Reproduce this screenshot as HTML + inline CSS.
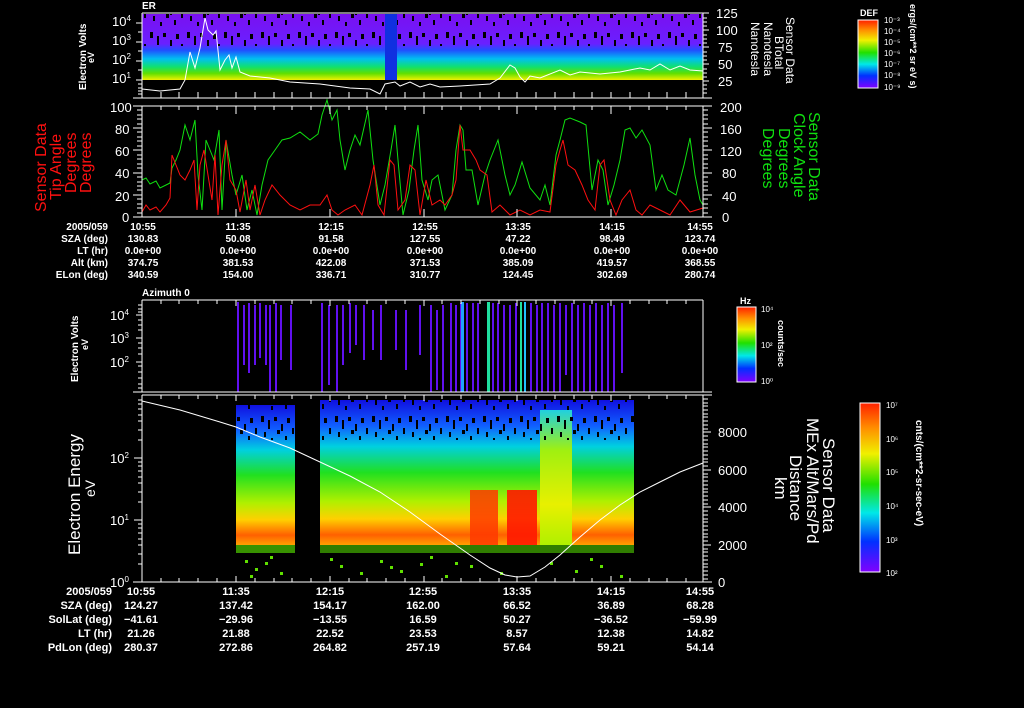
<!DOCTYPE html>
<html><head><style>
body{margin:0;background:#000;}
svg{display:block;font-family:"Liberation Sans",sans-serif;}
</style></head><body>
<svg width="1024" height="708" viewBox="0 0 1024 708" xmlns="http://www.w3.org/2000/svg">
<defs>
<linearGradient id="rb" x1="0" y1="0" x2="0" y2="1">
<stop offset="0" stop-color="#ff2000"/><stop offset="0.15" stop-color="#ff9000"/><stop offset="0.3" stop-color="#f0f000"/><stop offset="0.48" stop-color="#20e000"/><stop offset="0.65" stop-color="#00e8e8"/><stop offset="0.82" stop-color="#0030ff"/><stop offset="1" stop-color="#8000ff"/>
</linearGradient>
<linearGradient id="p1" x1="0" y1="0" x2="0" y2="1">
<stop offset="0" stop-color="#7a10f0"/><stop offset="0.45" stop-color="#6a20ff"/><stop offset="0.55" stop-color="#2050ff"/><stop offset="0.68" stop-color="#00c0f0"/><stop offset="0.8" stop-color="#10e070"/><stop offset="0.9" stop-color="#60e000"/><stop offset="1" stop-color="#f0f000"/>
</linearGradient>
<linearGradient id="p4" x1="0" y1="0" x2="0" y2="1">
<stop offset="0" stop-color="#1010e0"/><stop offset="0.18" stop-color="#1060ff"/><stop offset="0.32" stop-color="#00d0e0"/><stop offset="0.5" stop-color="#20e020"/><stop offset="0.7" stop-color="#b0f000"/><stop offset="0.82" stop-color="#ffd000"/><stop offset="0.93" stop-color="#ff6000"/><stop offset="1" stop-color="#ffa000"/>
</linearGradient>
<linearGradient id="p4b" x1="0" y1="0" x2="0" y2="1">
<stop offset="0" stop-color="#20d0e0"/><stop offset="0.3" stop-color="#a0f010"/><stop offset="0.7" stop-color="#e8f000"/><stop offset="1" stop-color="#b0f000"/>
</linearGradient>
<pattern id="sp" width="37" height="32" patternUnits="userSpaceOnUse">
<rect x="2" y="0" width="3" height="6" fill="#000"/><rect x="9" y="4" width="2" height="9" fill="#000"/><rect x="15" y="1" width="3" height="4" fill="#000"/><rect x="22" y="8" width="2" height="7" fill="#000"/><rect x="28" y="2" width="3" height="5" fill="#000"/><rect x="33" y="12" width="2" height="6" fill="#000"/><rect x="5" y="16" width="2" height="5" fill="#000"/><rect x="18" y="14" width="3" height="4" fill="#000"/><rect x="26" y="20" width="2" height="5" fill="#000"/><rect x="12" y="22" width="2" height="4" fill="#000"/>
</pattern>
</defs>

<!-- Panel 1 -->
<rect x="142" y="14" width="561" height="66" fill="url(#p1)"/>
<rect x="142" y="14" width="561" height="32" fill="url(#sp)"/>
<rect x="385" y="14" width="12" height="66" fill="#1030e0"/>
<polyline fill="none" stroke="#fff" stroke-width="1" points="142,89 160,91 180,89 185,80 190,52 195,68 200,48 205,18 208,30 213,35 216,31 220,70 225,60 229,55 232,68 236,57 240,72 250,76 270,78 290,82 320,84 350,88 370,89 380,94 385,84 395,82 400,86 410,82 420,87 430,84 440,87 460,86 490,84 500,78 510,65 515,68 520,77 525,82 530,76 540,78 560,70 570,75 580,72 600,74 620,72 630,70 640,68 650,70 660,64 670,70 680,66 690,70 703,71"/>
<g stroke="#fff" fill="none">
<path d="M142,13H703M133,98H712M142,13V98M703,13V98"/>
<path d="M142,23h-6M142,42h-6M142,61h-6M142,80h-6M142,88h-4M142,91h-4M142,94h-4M142,84h-4M142,70h-4M142,51h-4M142,32h-4"/>
<path d="M703,13h6M703,30h6M703,47h6M703,64h6M703,81h6"/>
<path d="M703,18h4M703,22h4M703,26h4M703,35h4M703,39h4M703,43h4M703,52h4M703,56h4M703,60h4M703,69h4M703,73h4M703,77h4M703,85h4M703,89h4M703,93h4"/>
<path d="M161,98v-6M179,98v-6M198,98v-6M217,98v-6M236,98v-6M255,98v-6M274,98v-6M292,98v-6M311,98v-6M330,98v-6M349,98v-6M367,98v-6M386,98v-6M405,98v-6M424,98v-6M442,98v-6M461,98v-6M480,98v-6M499,98v-6M517,98v-6M536,98v-6M555,98v-6M574,98v-6M592,98v-6M611,98v-6M630,98v-6M649,98v-6M667,98v-6M686,98v-6"/>
</g>
<g fill="#fff" font-size="13">
<text x="142" y="9" font-size="10" font-weight="bold">ER</text>
<text x="112" y="26">10<tspan font-size="8" dy="-5">4</tspan></text>
<text x="112" y="45">10<tspan font-size="8" dy="-5">3</tspan></text>
<text x="112" y="64">10<tspan font-size="8" dy="-5">2</tspan></text>
<text x="112" y="83">10<tspan font-size="8" dy="-5">1</tspan></text>
<text x="716" y="18">125</text><text x="716" y="35">100</text><text x="718" y="52">75</text><text x="718" y="69">50</text><text x="718" y="86">25</text>
</g>
<g fill="#fff" font-size="10" font-weight="bold">
<text transform="translate(86,90) rotate(-90)">Electron Volts</text>
<text transform="translate(94,63) rotate(-90)" font-size="9">eV</text>
</g>
<g fill="#fff" font-size="12">
<text transform="translate(786,17) rotate(90)">Sensor Data</text>
<text transform="translate(775,36) rotate(90)">BTotal</text>
<text transform="translate(764,22) rotate(90)">Nanotesla</text>
<text transform="translate(751,22) rotate(90)">Nanotesla</text>
</g>
<g fill="#fff" font-size="9" font-weight="bold">
<text x="860" y="16">DEF</text>
<text transform="translate(910,4) rotate(90)">ergs/(cm**2 sr eV s)</text>
</g>
<rect x="858" y="20" width="20" height="68" fill="url(#rb)" stroke="#fff"/>
<g fill="#fff" font-size="8"><text x="884" y="23">10⁻³</text><text x="884" y="34">10⁻⁴</text><text x="884" y="45">10⁻⁵</text><text x="884" y="56">10⁻⁶</text><text x="884" y="67">10⁻⁷</text><text x="884" y="78">10⁻⁸</text><text x="884" y="90">10⁻⁹</text></g>

<!-- Panel 2 -->
<polyline fill="none" stroke="#10e010" stroke-width="1" points="142,180 146,178 150,184 156,181 160,188 166,185 170,183 172,168 176,160 180,150 185,125 190,140 195,120 198,175 202,210 206,140 210,150 214,160 219,130 222,210 226,140 232,175 236,195 242,175 247,210 252,190 257,215 262,185 268,160 275,150 282,140 290,138 300,132 310,140 318,134 322,115 327,100 332,120 337,110 340,140 345,170 350,150 355,135 360,145 368,110 373,160 380,205 385,185 391,150 395,125 398,160 403,215 409,190 414,150 418,125 422,180 428,200 432,180 438,175 445,210 452,195 456,150 460,125 463,130 466,170 472,170 478,205 485,175 490,160 498,140 505,175 510,195 515,185 522,162 530,188 540,200 545,185 550,205 556,155 560,140 565,120 570,118 580,122 586,125 592,190 598,160 603,170 608,205 614,185 620,160 625,130 630,128 636,138 642,130 650,145 656,190 662,175 668,190 676,195 684,165 690,138 695,175 700,200 703,205"/>
<polyline fill="none" stroke="#ff1010" stroke-width="1" points="142,212 146,205 150,210 156,207 160,212 166,205 170,198 172,155 176,165 180,175 185,180 190,170 194,160 197,210 200,165 204,150 208,175 212,200 215,155 218,215 222,165 226,140 230,180 236,190 240,212 246,180 250,210 255,185 260,215 265,200 272,185 280,195 290,205 300,210 310,205 320,205 327,195 332,210 338,215 345,210 355,205 362,215 370,185 374,165 378,205 384,215 390,160 394,165 398,210 405,200 410,165 415,170 420,215 426,180 432,205 440,200 445,205 452,195 456,180 460,125 463,150 470,150 476,160 480,170 487,175 492,212 500,205 510,215 520,210 530,215 540,210 550,212 556,165 560,150 563,140 568,165 575,170 582,185 588,200 595,210 600,165 604,160 610,200 616,215 622,200 630,190 636,210 642,215 650,205 660,210 670,215 680,200 690,212 703,208"/>
<g stroke="#fff" fill="none">
<path d="M142,106H712M133,217H712M142,106V217M703,106V217"/>
<path d="M142,106h-9M142,128h-9M142,150h-9M142,173h-9M142,195h-9"/>
<path d="M142,110h-5M142,115h-5M142,119h-5M142,124h-5M142,132h-5M142,137h-5M142,141h-5M142,146h-5M142,155h-5M142,159h-5M142,164h-5M142,168h-5M142,177h-5M142,182h-5M142,186h-5M142,190h-5M142,199h-5M142,204h-5M142,208h-5M142,213h-5"/>
<path d="M703,106h9M703,128h9M703,150h9M703,173h9M703,195h9"/>
<path d="M703,110h5M703,115h5M703,119h5M703,124h5M703,132h5M703,137h5M703,141h5M703,146h5M703,155h5M703,159h5M703,164h5M703,168h5M703,177h5M703,182h5M703,186h5M703,190h5M703,199h5M703,204h5M703,208h5M703,213h5"/>
<path d="M161,106v4M179,106v4M198,106v4M217,106v4M255,106v4M274,106v4M292,106v4M311,106v4M349,106v4M367,106v4M386,106v4M405,106v4M442,106v4M461,106v4M480,106v4M499,106v4M536,106v4M555,106v4M574,106v4M592,106v4M630,106v4M649,106v4M667,106v4M686,106v4"/>
<path d="M236,106v8M330,106v8M424,106v8M517,106v8M611,106v8"/>
<path d="M236,217v-8M330,217v-8M424,217v-8M517,217v-8M611,217v-8"/>
</g>
<g fill="#fff" font-size="13">
<text x="110" y="112">100</text><text x="115" y="134">80</text><text x="115" y="156">60</text><text x="115" y="178">40</text><text x="115" y="201">20</text><text x="122" y="222">0</text>
<text x="720" y="112">200</text><text x="720" y="134">160</text><text x="720" y="156">120</text><text x="722" y="178">80</text><text x="722" y="201">40</text><text x="722" y="222">0</text>
</g>
<g fill="#ff1010" font-size="16">
<text transform="translate(46,212) rotate(-90)">Sensor Data</text>
<text transform="translate(61,200) rotate(-90)">Tip Angle</text>
<text transform="translate(76,193) rotate(-90)">Degrees</text>
<text transform="translate(91,193) rotate(-90)">Degrees</text>
</g>
<g fill="#10e010" font-size="16">
<text transform="translate(809,112) rotate(90)">Sensor Data</text>
<text transform="translate(794,113) rotate(90)">Clock Angle</text>
<text transform="translate(779,128) rotate(90)">Degrees</text>
<text transform="translate(763,128) rotate(90)">Degrees</text>
</g>
<g fill="#fff" font-size="10" font-weight="bold" text-anchor="middle">
<text x="108" y="230" text-anchor="end">2005/059</text>
<text x="108" y="242" text-anchor="end">SZA (deg)</text>
<text x="108" y="254" text-anchor="end">LT (hr)</text>
<text x="108" y="266" text-anchor="end">Alt (km)</text>
<text x="108" y="278" text-anchor="end">ELon (deg)</text>
<text x="143" y="230">10:55</text><text x="238" y="230">11:35</text><text x="331" y="230">12:15</text><text x="425" y="230">12:55</text><text x="518" y="230">13:35</text><text x="612" y="230">14:15</text><text x="700" y="230">14:55</text>
<text x="143" y="242">130.83</text><text x="238" y="242">50.08</text><text x="331" y="242">91.58</text><text x="425" y="242">127.55</text><text x="518" y="242">47.22</text><text x="612" y="242">98.49</text><text x="700" y="242">123.74</text>
<text x="143" y="254">0.0e+00</text><text x="238" y="254">0.0e+00</text><text x="331" y="254">0.0e+00</text><text x="425" y="254">0.0e+00</text><text x="518" y="254">0.0e+00</text><text x="612" y="254">0.0e+00</text><text x="700" y="254">0.0e+00</text>
<text x="143" y="266">374.75</text><text x="238" y="266">381.53</text><text x="331" y="266">422.08</text><text x="425" y="266">371.53</text><text x="518" y="266">385.09</text><text x="612" y="266">419.57</text><text x="700" y="266">368.55</text>
<text x="143" y="278">340.59</text><text x="238" y="278">154.00</text><text x="331" y="278">336.71</text><text x="425" y="278">310.77</text><text x="518" y="278">124.45</text><text x="612" y="278">302.69</text><text x="700" y="278">280.74</text>
</g>

<!-- Panel 3 -->
<g fill="#6010f0">
<rect x="237" y="302" width="2" height="90"/><rect x="243" y="305" width="2" height="60"/><rect x="248" y="303" width="2" height="70"/><rect x="254" y="305" width="2" height="60"/><rect x="259" y="303" width="2" height="55"/><rect x="265" y="305" width="2" height="60"/><rect x="269" y="305" width="2" height="87"/><rect x="275" y="303" width="2" height="89"/><rect x="280" y="305" width="2" height="55"/><rect x="290" y="305" width="2" height="65"/>
<rect x="321" y="303" width="2" height="89"/><rect x="328" y="305" width="2" height="80"/><rect x="336" y="305" width="2" height="87"/><rect x="342" y="305" width="2" height="60"/><rect x="349" y="303" width="2" height="50"/><rect x="355" y="305" width="2" height="40"/><rect x="363" y="305" width="2" height="55"/><rect x="372" y="310" width="2" height="40"/><rect x="380" y="305" width="2" height="55"/><rect x="395" y="310" width="2" height="40"/><rect x="405" y="310" width="2" height="60"/><rect x="419" y="305" width="2" height="50"/><rect x="430" y="305" width="2" height="87"/><rect x="436" y="310" width="2" height="80"/><rect x="442" y="305" width="2" height="87"/><rect x="450" y="303" width="2" height="89"/><rect x="455" y="305" width="2" height="87"/><rect x="460" y="303" width="2" height="89"/><rect x="466" y="303" width="2" height="89"/><rect x="472" y="303" width="2" height="89"/><rect x="477" y="303" width="2" height="89"/><rect x="492" y="303" width="2" height="89"/><rect x="497" y="303" width="2" height="89"/><rect x="503" y="305" width="2" height="87"/><rect x="509" y="305" width="2" height="87"/><rect x="515" y="303" width="2" height="89"/><rect x="530" y="303" width="2" height="89"/><rect x="536" y="305" width="2" height="87"/><rect x="541" y="303" width="2" height="89"/><rect x="547" y="303" width="2" height="89"/><rect x="553" y="305" width="2" height="87"/><rect x="559" y="303" width="2" height="89"/><rect x="565" y="305" width="2" height="70"/><rect x="571" y="303" width="2" height="89"/><rect x="577" y="305" width="2" height="87"/><rect x="583" y="303" width="2" height="89"/><rect x="589" y="305" width="2" height="87"/><rect x="595" y="303" width="2" height="89"/><rect x="601" y="305" width="2" height="87"/><rect x="607" y="303" width="2" height="89"/><rect x="613" y="305" width="2" height="87"/><rect x="621" y="303" width="2" height="70"/>
</g>
<rect x="461" y="302" width="3" height="90" fill="#20a0ff"/><rect x="487" y="302" width="3" height="90" fill="#20e0a0"/><rect x="520" y="302" width="2" height="90" fill="#20e0a0"/><rect x="524" y="302" width="2" height="90" fill="#20c0ff"/>
<g stroke="#fff" fill="none">
<path d="M142,300H703M133,392H712M142,300V392M703,300V392"/>
<path d="M142,315h-6M142,338h-6M142,362h-6M142,305h-4M142,309h-4M142,312h-4M142,320h-4M142,325h-4M142,330h-4M142,343h-4M142,348h-4M142,354h-4M142,366h-4M142,372h-4M142,378h-4M142,384h-4M142,388h-4"/>
<path d="M161,300v4M179,300v4M198,300v4M217,300v4M236,300v6M255,300v4M274,300v4M292,300v4M311,300v4M330,300v6M349,300v4M367,300v4M386,300v4M405,300v4M424,300v6M442,300v4M461,300v4M480,300v4M499,300v4M517,300v6M536,300v4M555,300v4M574,300v4M592,300v4M611,300v6M630,300v4M649,300v4M667,300v4M686,300v4"/>
</g>
<g fill="#fff" font-size="13">
<text x="110" y="320">10<tspan font-size="8" dy="-5">4</tspan></text>
<text x="110" y="343">10<tspan font-size="8" dy="-5">3</tspan></text>
<text x="110" y="367">10<tspan font-size="8" dy="-5">2</tspan></text>
</g>
<g fill="#fff" font-size="10" font-weight="bold">
<text x="142" y="296">Azimuth 0</text>
<text transform="translate(78,382) rotate(-90)">Electron Volts</text>
<text transform="translate(88,350) rotate(-90)" font-size="9">eV</text>
<text x="740" y="304" font-size="9">Hz</text>
<text transform="translate(778,320) rotate(90)" font-size="9">counts/sec</text>
</g>
<rect x="737" y="307" width="19" height="75" fill="url(#rb)" stroke="#fff"/>
<g fill="#fff" font-size="8"><text x="761" y="312">10⁴</text><text x="761" y="348">10²</text><text x="761" y="384">10⁰</text></g>

<!-- Panel 4 -->
<rect x="236" y="405" width="59" height="140" fill="url(#p4)"/>
<rect x="320" y="400" width="314" height="145" fill="url(#p4)"/>
<rect x="540" y="410" width="32" height="135" fill="url(#p4b)"/>
<rect x="236" y="400" width="59" height="40" fill="url(#sp)"/>
<rect x="320" y="400" width="314" height="40" fill="url(#sp)"/>
<rect x="470" y="490" width="28" height="55" fill="#ff3800" opacity="0.85"/>
<rect x="507" y="490" width="30" height="55" fill="#ff1800" opacity="0.9"/>
<rect x="236" y="545" width="59" height="8" fill="#50d000" opacity="0.7"/>
<rect x="320" y="545" width="314" height="8" fill="#50d000" opacity="0.6"/>
<g fill="#60e000">
<rect x="245" y="560" width="3" height="3"/><rect x="255" y="568" width="3" height="3"/><rect x="265" y="562" width="3" height="3"/><rect x="280" y="572" width="3" height="3"/><rect x="340" y="565" width="3" height="3"/><rect x="360" y="572" width="3" height="3"/><rect x="380" y="560" width="3" height="3"/><rect x="400" y="570" width="3" height="3"/><rect x="420" y="563" width="3" height="3"/><rect x="445" y="575" width="3" height="3"/><rect x="470" y="565" width="3" height="3"/><rect x="500" y="572" width="3" height="3"/><rect x="550" y="562" width="3" height="3"/><rect x="575" y="570" width="3" height="3"/><rect x="600" y="565" width="3" height="3"/><rect x="620" y="575" width="3" height="3"/>
<rect x="330" y="558" width="3" height="3"/><rect x="390" y="566" width="3" height="3"/><rect x="430" y="556" width="3" height="3"/><rect x="455" y="562" width="3" height="3"/><rect x="590" y="558" width="3" height="3"/><rect x="250" y="575" width="3" height="3"/><rect x="270" y="556" width="3" height="3"/>
</g>
<polyline fill="none" stroke="#fff" stroke-width="1" points="142,401 180,410 220,422 236,427 260,437 290,448 320,462 350,476 380,492 410,512 440,534 470,555 490,568 505,575 517,577 530,576 545,567 560,555 580,537 600,520 620,505 640,492 660,482 680,472 703,463"/>
<g stroke="#fff" fill="none">
<path d="M142,395H712M133,582H712M142,395V582M703,395V582"/>
<path d="M142,458h-8M142,520h-8M142,582h-8M142,400h-4M142,404h-4M142,409h-4M142,415h-4M142,421h-4M142,430h-4M142,440h-4M142,462h-4M142,466h-4M142,471h-4M142,477h-4M142,483h-4M142,492h-4M142,502h-4M142,524h-4M142,528h-4M142,533h-4M142,539h-4M142,545h-4M142,554h-4M142,564h-4"/>
<path d="M703,432h8M703,470h8M703,507h8M703,545h8M703,582h8"/>
<path d="M703,399h5M703,403h5M703,406h5M703,410h5M703,414h5M703,417h5M703,421h5M703,425h5M703,429h5M703,436h5M703,440h5M703,444h5M703,447h5M703,451h5M703,455h5M703,459h5M703,462h5M703,466h5M703,474h5M703,477h5M703,481h5M703,485h5M703,489h5M703,492h5M703,496h5M703,500h5M703,504h5M703,511h5M703,515h5M703,519h5M703,522h5M703,526h5M703,530h5M703,534h5M703,537h5M703,541h5M703,549h5M703,552h5M703,556h5M703,560h5M703,564h5M703,567h5M703,571h5M703,575h5M703,579h5"/>
<path d="M161,395v4M179,395v4M198,395v4M217,395v4M236,395v6M255,395v4M274,395v4M292,395v4M311,395v4M330,395v6M349,395v4M367,395v4M386,395v4M405,395v4M424,395v6M442,395v4M461,395v4M480,395v4M499,395v4M517,395v6M536,395v4M555,395v4M574,395v4M592,395v4M611,395v6M630,395v4M649,395v4M667,395v4M686,395v4"/>
<path d="M161,582v-4M179,582v-4M198,582v-4M217,582v-4M236,582v-6M255,582v-4M274,582v-4M292,582v-4M311,582v-4M330,582v-6M349,582v-4M367,582v-4M386,582v-4M405,582v-4M424,582v-6M442,582v-4M461,582v-4M480,582v-4M499,582v-4M517,582v-6M536,582v-4M555,582v-4M574,582v-4M592,582v-4M611,582v-6M630,582v-4M649,582v-4M667,582v-4M686,582v-4"/>
</g>
<g fill="#fff" font-size="13">
<text x="110" y="463">10<tspan font-size="8" dy="-5">2</tspan></text>
<text x="110" y="525">10<tspan font-size="8" dy="-5">1</tspan></text>
<text x="110" y="587">10<tspan font-size="8" dy="-5">0</tspan></text>
<text x="718" y="437">8000</text><text x="718" y="475">6000</text><text x="718" y="512">4000</text><text x="718" y="550">2000</text><text x="718" y="587">0</text>
</g>
<g fill="#fff" font-size="17">
<text transform="translate(80,555) rotate(-90)">Electron Energy</text>
<text transform="translate(95,497) rotate(-90)" font-size="14">eV</text>
<text transform="translate(823,438) rotate(90)">Sensor Data</text>
<text transform="translate(807,418) rotate(90)">MEx Alt/Mars/Pd</text>
<text transform="translate(790,455) rotate(90)">Distance</text>
<text transform="translate(775,477) rotate(90)">km</text>
</g>
<rect x="860" y="403" width="20" height="169" fill="url(#rb)" stroke="#fff"/>
<g fill="#fff" font-size="8"><text x="886" y="408">10⁷</text><text x="886" y="442">10⁶</text><text x="886" y="475">10⁵</text><text x="886" y="509">10⁴</text><text x="886" y="543">10³</text><text x="886" y="576">10²</text></g>
<text transform="translate(916,420) rotate(90)" fill="#fff" font-size="10" font-weight="bold">cnts/(cm**2-sr-sec-eV)</text>

<g fill="#fff" font-size="11" font-weight="bold" text-anchor="middle">
<text x="112" y="595" text-anchor="end">2005/059</text>
<text x="112" y="609" text-anchor="end">SZA (deg)</text>
<text x="112" y="623" text-anchor="end">SolLat (deg)</text>
<text x="112" y="637" text-anchor="end">LT (hr)</text>
<text x="112" y="651" text-anchor="end">PdLon (deg)</text>
<text x="141" y="595">10:55</text><text x="236" y="595">11:35</text><text x="330" y="595">12:15</text><text x="423" y="595">12:55</text><text x="517" y="595">13:35</text><text x="611" y="595">14:15</text><text x="700" y="595">14:55</text>
<text x="141" y="609">124.27</text><text x="236" y="609">137.42</text><text x="330" y="609">154.17</text><text x="423" y="609">162.00</text><text x="517" y="609">66.52</text><text x="611" y="609">36.89</text><text x="700" y="609">68.28</text>
<text x="141" y="623">−41.61</text><text x="236" y="623">−29.96</text><text x="330" y="623">−13.55</text><text x="423" y="623">16.59</text><text x="517" y="623">50.27</text><text x="611" y="623">−36.52</text><text x="700" y="623">−59.99</text>
<text x="141" y="637">21.26</text><text x="236" y="637">21.88</text><text x="330" y="637">22.52</text><text x="423" y="637">23.53</text><text x="517" y="637">8.57</text><text x="611" y="637">12.38</text><text x="700" y="637">14.82</text>
<text x="141" y="651">280.37</text><text x="236" y="651">272.86</text><text x="330" y="651">264.82</text><text x="423" y="651">257.19</text><text x="517" y="651">57.64</text><text x="611" y="651">59.21</text><text x="700" y="651">54.14</text>
</g>
</svg>
</body></html>
